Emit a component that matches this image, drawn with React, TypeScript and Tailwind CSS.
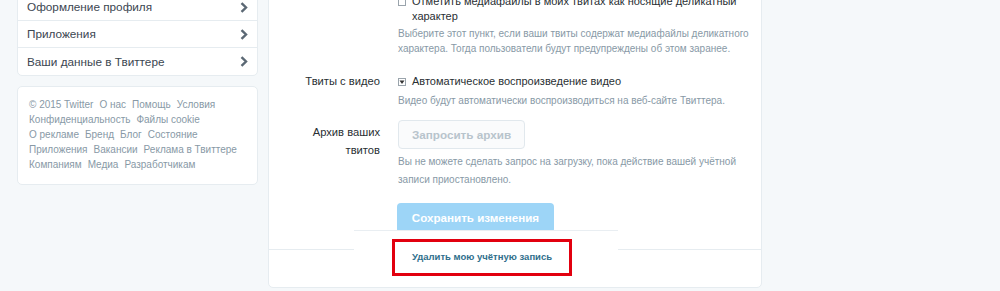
import React from 'react';

const Chevron = () => (
  <svg width="8" height="11" viewBox="0 0 8 11" className="shrink-0">
    <polyline points="1.5,1.2 6,5.5 1.5,9.8" fill="none" stroke="#5b6874" strokeWidth="2.4" />
  </svg>
);

const Checkbox = ({ checked }: { checked?: boolean }) => (
  <span className="mt-[4px] mr-[6px] flex h-[8px] w-[8px] shrink-0 items-center justify-center border border-[#9aa4ac] bg-white">
    {checked && (
      <svg width="6" height="6" viewBox="0 0 6 6">
        <path d="M0.5 1.5 L5.5 1.5 L3 5 Z" fill="#333" />
      </svg>
    )}
  </span>
);

const menu = ['Оформление профиля', 'Приложения', 'Ваши данные в Твиттере'];

const footerLines = [
  ['© 2015 Twitter', 'О нас', 'Помощь', 'Условия'],
  ['Конфиденциальность', 'Файлы cookie'],
  ['О рекламе', 'Бренд', 'Блог', 'Состояние'],
  ['Приложения', 'Вакансии', 'Реклама в Твиттере'],
  ['Компаниям', 'Медиа', 'Разработчикам'],
];

const App = () => {
  return (
    <div className="h-[291px] overflow-hidden bg-[#f5f8fa] font-['Liberation_Sans',Arial,sans-serif]">
      <div className="flex items-start gap-[10px] pl-[17px]">
        {/* Sidebar */}
        <aside className="-mt-[7px] flex w-[241px] flex-col gap-[10px]">
          <div className="rounded-[5px] border border-[#e6ecf0] bg-white">
            {menu.map((item, i) => (
              <div
                key={item}
                className={`flex h-[27px] items-center justify-between pl-[9px] pr-[9px] text-[11.75px] text-[#3b4651] ${
                  i < menu.length - 1 ? 'border-b border-[#e6ecf0]' : ''
                }`}
              >
                <span>{item}</span>
                <Chevron />
              </div>
            ))}
          </div>
          <div className="rounded-[5px] border border-[#e6ecf0] bg-white px-[11px] pt-[10px] pb-[12px] text-[10px] leading-[15px] text-[#8899a6]">
            {footerLines.map((line, i) => (
              <div key={i} className="flex gap-[6px] whitespace-nowrap">
                {line.map((l) => (
                  <span key={l}>{l}</span>
                ))}
              </div>
            ))}
          </div>
        </aside>

        {/* Main settings card */}
        <main className="relative -mt-[20px] w-[494px] rounded-[5px] border border-[#e6ecf0] bg-white pt-[13px]">
          <div className="flex">
            <div className="w-[111px]" />
            <div className="ml-[18px] w-[356px]">
              <div className="flex text-[11px] leading-[15px] text-[#292f33]">
                <Checkbox />
                <span>Отметить медиафайлы в моих твитах как носящие деликатный характер</span>
              </div>
              <p className="mt-[2px] text-[10px] leading-[15px] text-[#8899a6]">
                Выберите этот пункт, если ваши твиты содержат медиафайлы деликатного характера. Тогда пользователи будут предупреждены об этом заранее.
              </p>
            </div>
          </div>

          <div className="mt-[18px] flex">
            <div className="w-[111px] text-right text-[11.2px] leading-[15px] text-[#292f33]">Твиты с видео</div>
            <div className="ml-[18px] w-[356px]">
              <div className="flex text-[11px] leading-[15px] text-[#292f33]">
                <Checkbox checked />
                <span>Автоматическое воспроизведение видео</span>
              </div>
              <p className="mt-[4px] text-[10px] leading-[15px] text-[#8899a6]">
                Видео будут автоматически воспроизводиться на веб-сайте Твиттера.
              </p>
            </div>
          </div>

          <div className="mt-[12px] flex">
            <div className="w-[111px] pl-[30px] pt-[3px] text-right text-[11.2px] leading-[18px] text-[#292f33]">
              Архив ваших твитов
            </div>
            <div className="ml-[18px] w-[356px]">
              <button className="h-[29px] w-[127px] rounded-[4px] border border-[#e1e8ed] bg-[#fafbfc] text-[11.7px] font-bold text-[#b8c4cc]">
                Запросить архив
              </button>
              <p className="mt-[4px] text-[10px] leading-[18px] text-[#8899a6]">
                Вы не можете сделать запрос на загрузку, пока действие вашей учётной записи приостановлено.
              </p>
              <button className="ml-[-1px] mt-[14px] h-[30px] w-[157px] rounded-[4px] bg-[#9dd5f7] text-[11.6px] font-bold text-white">
                Сохранить изменения
              </button>
            </div>
          </div>

          <div className="mt-[16px] h-[38px] border-t border-[#e6ecf0]" />

          {/* Pasted overlay with highlighted link */}
          <div className="absolute bottom-0 left-[85px] h-[57px] w-[264px] border-t border-[#e9eef2] bg-white">
            <div className="ml-[38px] mt-[8px] flex h-[37px] w-[180px] items-center justify-center border-[3px] border-[#e2000f]">
              <a className="text-[9.5px] font-bold text-[#2f6f8c]">Удалить мою учётную запись</a>
            </div>
          </div>
        </main>
      </div>
    </div>
  );
};

export default App;
